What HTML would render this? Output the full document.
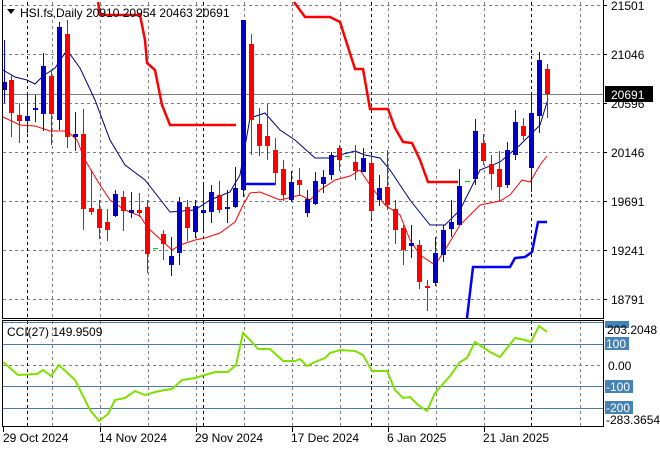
<!DOCTYPE html>
<html><head><meta charset="utf-8"><style>
body{margin:0;background:#fff;width:660px;height:450px;overflow:hidden}
svg{display:block;font-family:"Liberation Sans",sans-serif;font-size:12px}
</style></head><body>
<svg width="660" height="450" viewBox="0 0 660 450" xmlns="http://www.w3.org/2000/svg">
<rect width="660" height="450" fill="#fff"/>
<g stroke="#808080" stroke-dasharray="3,3" stroke-width="1">
<path d="M3 54.5H603M3 103.5H603M3 152.5H603M3 201.5H603M3 250.5H603M3 299.5H603M3 5.5H603"/>
<path d="M52.5 2V318M100.5 2V318M148.5 2V318M196.5 2V318M244.5 2V318M292.5 2V318M340.5 2V318M388.5 2V318M436.5 2V318M484.5 2V318M580.5 2V318"/>
<path d="M52.5 321V426M100.5 321V426M148.5 321V426M196.5 321V426M244.5 321V426M292.5 321V426M340.5 321V426M388.5 321V426M436.5 321V426M484.5 321V426M580.5 321V426"/>
<path d="M3 365.5H603"/>
</g>
<g stroke="#000" stroke-dasharray="3,3">
<path d="M27.5 2V318M203.5 2V318M371.5 2V318M531.5 2V318M27.5 321V426M203.5 321V426M371.5 321V426M531.5 321V426"/>
</g>
<path d="M3 94.5H603" stroke="#808080"/>
<g stroke="#4a7aa6"><path d="M3 322.5H603M3 344.5H603M3 386.5H603M3 408.5H603"/></g>
<g fill="none" stroke-width="2.5">
<polyline stroke="#f00" points="98,2 100,15 140,15 145,40 147,63 155,70 162,105 170,125 236,125"/>
<polyline stroke="#f00" points="294,2 305,17 330,17 340,22 355,69 363,69 370,109 388,109 395,128 403,142 412,143 420,160 428,182 458,182"/>
<polyline stroke="#00f" points="246,184 275,184"/>
<polyline stroke="#00f" points="467,318 473,267 510,267 515,258 525,257 532,252 538,222 547,222"/>
</g>
<polyline fill="none" stroke="#000080" stroke-width="1" points="3,70 15,77 27,80 35,84 43,76 55,68 67,50 80,68 95,100 110,140 125,165 145,180 170,212 195,210 210,200 230,192 240,175 250,118 265,113 280,130 295,140 315,158 330,158 340,155 355,151 365,155 380,158 390,170 410,200 430,225 445,225 460,210 480,170 500,162 520,145 540,125 548,99"/>
<polyline fill="none" stroke="#f00" stroke-width="1" points="3,117 20,125 35,126 50,131 67,131 77,140 85,160 100,185 110,200 125,210 140,216 148,228 160,239 172,250 180,245 195,240 205,238 220,233 235,222 243,205 250,193 260,192 280,200 300,195 310,200 320,190 335,180 350,176 360,170 370,185 385,205 400,215 410,240 420,255 435,265 445,250 460,225 480,205 500,201 510,195 522,180 530,182 540,165 547,156"/>
<g stroke-width="1">
<g stroke="#00f" fill="#0000c8">
<path d="M4.5 40V103M27.5 92V133M35.5 95V122M43.5 53V131M59.5 22V130M75.5 112V151M115.5 190V217M131.5 192V218M171.5 237V276M179.5 197V265M195.5 200V238M203.5 185V230M211.5 185V223M227.5 190V223M235.5 167V208M243.5 20V197M291.5 171V202M307.5 190V217M315.5 172V205M323.5 170V193M331.5 152V180M363.5 148V172M379.5 175V206M411.5 225V258M435.5 237V286M443.5 225V262M451.5 200V237M459.5 169V225M475.5 119V185M507.5 142V188M515.5 110V160M531.5 94V192M539.5 52V133"/>
</g>
<g stroke="#f00">
<path d="M11.5 75V137M19.5 103V143M51.5 70V145M67.5 20V148M83.5 109V230M91.5 170V215M99.5 200V239M107.5 209V241M123.5 191V231M139.5 193V217M147.5 200V273M163.5 230V260M187.5 200V241M219.5 181V213M251.5 34V155M259.5 108V156M267.5 104V160M275.5 138V185M283.5 160V201M299.5 168V195M339.5 145V171M355.5 145V180M371.5 155V218M387.5 150V210M395.5 200V244M403.5 225V265M419.5 240V289M427.5 280V311M483.5 134V165M491.5 155V190M499.5 151V202M523.5 118V140M547.5 64V118"/>
</g>
<g fill="#0000c8">
<rect x="2" y="82" width="5" height="8"/><rect x="25" y="116" width="5" height="5"/><rect x="33" y="108" width="5" height="2"/><rect x="41" y="66" width="5" height="48"/><rect x="57" y="27" width="5" height="93"/><rect x="73" y="134" width="5" height="3"/><rect x="113" y="194" width="5" height="22"/><rect x="129" y="210" width="5" height="3"/><rect x="169" y="256" width="5" height="9"/><rect x="177" y="202" width="5" height="51"/><rect x="193" y="206" width="5" height="26"/><rect x="201" y="210" width="5" height="3"/><rect x="209" y="192" width="5" height="20"/><rect x="225" y="207" width="5" height="2"/><rect x="233" y="188" width="5" height="19"/><rect x="241" y="20" width="5" height="170"/><rect x="289" y="182" width="5" height="18"/><rect x="305" y="199" width="5" height="14"/><rect x="313" y="181" width="5" height="23"/><rect x="321" y="177" width="5" height="7"/><rect x="329" y="155" width="5" height="20"/><rect x="361" y="158" width="5" height="14"/><rect x="377" y="188" width="5" height="12"/><rect x="409" y="243" width="5" height="3"/><rect x="433" y="253" width="5" height="30"/><rect x="441" y="230" width="5" height="25"/><rect x="449" y="222" width="5" height="7"/><rect x="457" y="186" width="5" height="39"/><rect x="473" y="131" width="5" height="48"/><rect x="505" y="150" width="5" height="35"/><rect x="513" y="122" width="5" height="33"/><rect x="529" y="113" width="5" height="55"/><rect x="537" y="60" width="5" height="56"/>
</g>
<g fill="#f00">
<rect x="9" y="80" width="5" height="33"/><rect x="17" y="115" width="5" height="6"/><rect x="49" y="76" width="5" height="38"/><rect x="65" y="34" width="5" height="103"/><rect x="81" y="134" width="5" height="75"/><rect x="89" y="208" width="5" height="4"/><rect x="97" y="209" width="5" height="19"/><rect x="105" y="222" width="5" height="8"/><rect x="121" y="197" width="5" height="14"/><rect x="137" y="210" width="5" height="3"/><rect x="145" y="207" width="5" height="47"/><rect x="161" y="234" width="5" height="10"/><rect x="185" y="207" width="5" height="21"/><rect x="217" y="195" width="5" height="15"/><rect x="249" y="44" width="5" height="76"/><rect x="257" y="124" width="5" height="22"/><rect x="265" y="136" width="5" height="10"/><rect x="273" y="150" width="5" height="23"/><rect x="281" y="169" width="5" height="26"/><rect x="297" y="180" width="5" height="5"/><rect x="337" y="148" width="5" height="12"/><rect x="353" y="162" width="5" height="9"/><rect x="369" y="163" width="5" height="48"/><rect x="385" y="187" width="5" height="18"/><rect x="393" y="209" width="5" height="21"/><rect x="401" y="228" width="5" height="22"/><rect x="417" y="245" width="5" height="37"/><rect x="425" y="286" width="5" height="2"/><rect x="481" y="143" width="5" height="18"/><rect x="489" y="164" width="5" height="10"/><rect x="497" y="169" width="5" height="18"/><rect x="521" y="126" width="5" height="10"/><rect x="545" y="69" width="5" height="25"/>
</g>
<path d="M153 248.5H158M345 156.5H350M465 181.5H470" stroke="#0c0"/>
</g>
<polyline fill="none" stroke="#7fe000" stroke-width="2" points="3,362 18,375 37,374 43,370 51,376 59,365 75,380 90,410 99,421 108,414 115,400 125,398 135,391 145,395 155,392 165,390 172,389 182,380 195,378 205,375 215,372 228,372 236,365 243,333 250,340 258,349 270,349 283,361 295,361 300,359 307,366 315,362 325,358 330,353 340,350 355,351 363,355 372,371 387,371 395,390 403,398 410,397 418,405 427,411 435,393 450,376 460,362 467,358 475,342 490,352 500,357 515,338 525,340 531,342 539,326 547,332"/>
<g fill="none" stroke="#000" stroke-width="1">
<path d="M2.5 0V318.5H603.5V0"/>
<rect x="2.5" y="320.5" width="601" height="106"/>
<path d="M603.5 5.5H607M603.5 54.5H607M603.5 103.5H607M603.5 152.5H607M603.5 201.5H607M603.5 250.5H607M603.5 299.5H607"/>
<path d="M3.5 426V432M100.5 426V432M196.5 426V432M292.5 426V432M388.5 426V432M484.5 426V432"/>
</g>
<path d="M7 9H15L11 14Z" fill="#000"/>
<text x="20" y="17" fill="#000">HSI.fs,Daily  20910 20954 20463 20691</text>
<text x="7" y="336" fill="#000">CCI(27) 149.9509</text>
<g fill="#000">
<text x="611" y="10">21501</text><text x="611" y="59">21046</text><text x="611" y="108">20596</text><text x="611" y="157">20146</text><text x="611" y="206">19691</text><text x="611" y="255">19241</text><text x="611" y="304">18791</text>
</g>
<rect x="605" y="86" width="48" height="16" fill="#000"/>
<text x="611" y="99" fill="#fff">20691</text>
<g fill="#4682b4">
<rect x="605" y="321" width="24" height="7"/><rect x="605" y="337" width="24" height="13"/><rect x="605" y="380" width="28" height="13"/><rect x="605" y="401" width="28" height="13"/>
</g>
<g fill="#fff"><text x="606" y="348">100</text><text x="606" y="391">-100</text><text x="606" y="412">-200</text></g>
<g fill="#000"><text x="607" y="334">203.2048</text><text x="608" y="370">0.00</text><text x="606" y="424">-283.3654</text></g>
<g fill="#000">
<text x="3" y="442">29 Oct 2024</text><text x="99" y="442">14 Nov 2024</text><text x="195" y="442">29 Nov 2024</text><text x="291" y="442">17 Dec 2024</text><text x="387" y="442">6 Jan 2025</text><text x="483" y="442">21 Jan 2025</text>
</g>
</svg>
</body></html>
